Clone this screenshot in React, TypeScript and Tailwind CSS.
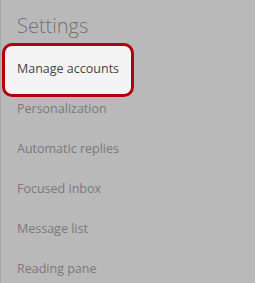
import React from 'react';

const items = ['Personalization', 'Automatic replies', 'Focused inbox', 'Message list', 'Reading pane'];

export default function App() {
    return (
        <div className="w-[255px] h-[283px] overflow-hidden bg-[#b9b9b9] border-l border-[#a9a9a9] font-['Open_Sans',sans-serif]">
            {/* Header */}
            <div className="h-[49px] pt-[12px] pl-4 text-[20px] leading-7 font-light text-[#727272]">Settings</div>

            {/* Highlighted item */}
            <div className="relative h-10 flex items-center">
                <div className="absolute left-[1px] -top-[6px] w-[132px] h-[54px] rounded-[10px] border-[3px] border-[#b3000f] bg-[#f4f4f4]"></div>
                <span className="relative pl-4 text-[12.5px] text-[#444]">Manage accounts</span>
            </div>

            {items.map((item) => (
                <div key={item} className="h-10 flex items-center pl-4 text-[12.5px] text-[#7a7a7a]">
                    {item}
                </div>
            ))}
        </div>
    );
}
